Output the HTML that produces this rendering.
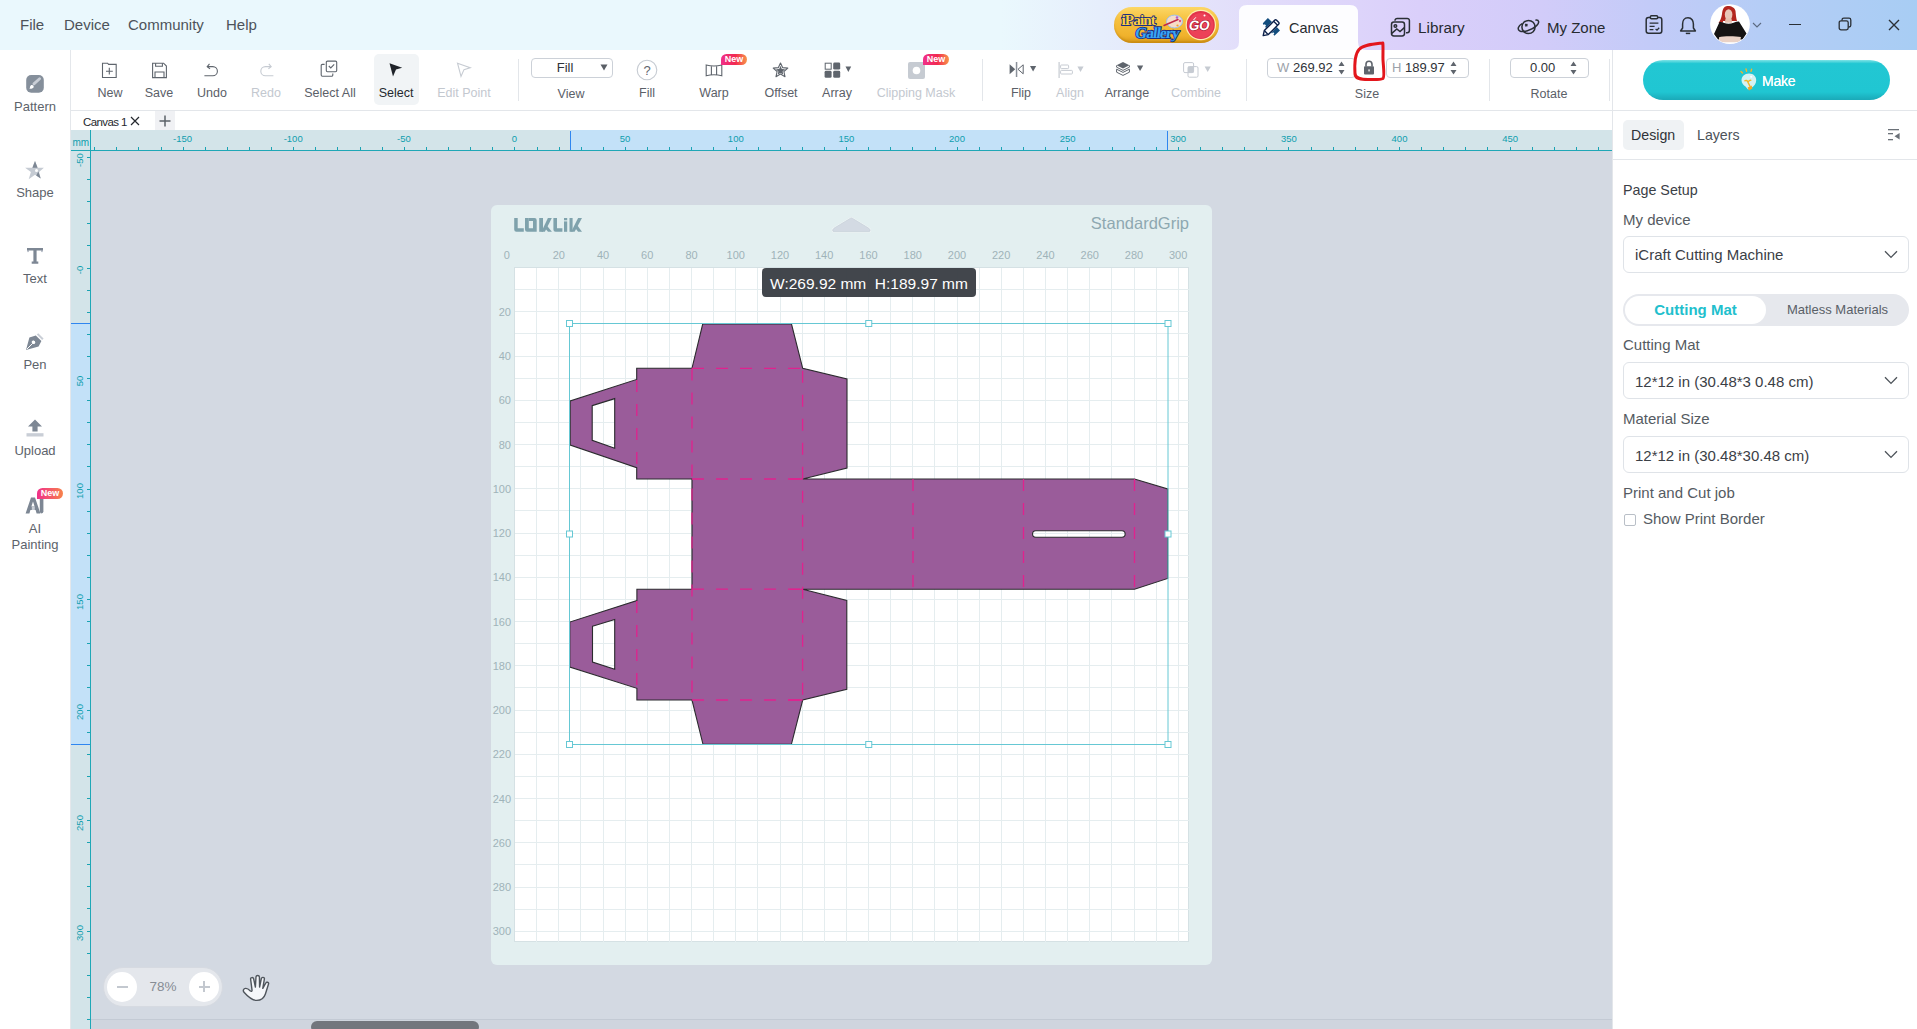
<!DOCTYPE html>
<html><head><meta charset="utf-8">
<style>
*{margin:0;padding:0;box-sizing:border-box}
html,body{width:1917px;height:1029px;overflow:hidden;background:#fff;font-family:"Liberation Sans",sans-serif;color:#4a4f56}
.a{position:absolute}
#top{left:0;top:0;width:1917px;height:50px;background:linear-gradient(90deg,#eaf8fd 0px,#eaf8fd 1000px,#e6eefc 1100px,#e2dcfa 1260px,#dacffa 1420px,#d2ccf9 1540px,#c3cbf8 1650px,#b5cdf6 1760px,#a8cdf4 1917px)}
.menu{top:16px;font-size:15px;color:#4d535a;line-height:18px}
#left{left:0;top:50px;width:71px;height:979px;background:#fff;border-right:1px solid #e4e7eb}
.sb{left:0;width:70px;text-align:center;font-size:13px;color:#5d636b;line-height:16px}
#tool{left:71px;top:50px;width:1541px;height:61px;background:#fff;border-bottom:1px solid #e3e6ea}
.tl{font-size:12.5px;color:#5b6068;line-height:14px;text-align:center;white-space:nowrap}
.dis{color:#c3c8cf}
.sep{width:1px;background:#e3e6ea}
#tabs{left:71px;top:111px;width:1541px;height:19px;background:#fff}
#hr{left:71px;top:130px;width:1541px;height:20px;background:#d3e4e9}
#vr{left:71px;top:150px;width:20px;height:879px;background:#d3e4e9}
#cv{left:91px;top:151px;width:1521px;height:878px;background:#d3d9e2}
#rp{left:1612px;top:50px;width:305px;height:979px;background:#fff;border-left:1px solid #e3e6ea}
.rl{font-size:14.5px;color:#555b62;line-height:18px}
.dd{left:1623px;width:286px;height:37px;border:1px solid #dfe3e8;border-radius:6px;background:#fff}
.dd span{position:absolute;left:11px;top:9px;font-size:15px;color:#3b4046;line-height:18px;white-space:nowrap}
.rul{font-size:9.5px;color:#0f9eae;line-height:12px}
.ml{font-size:11px;color:#9fb3b9;line-height:12px}
</style></head><body>
<!-- TOP BAR -->
<div id="top" class="a"></div>
<div class="a menu" style="left:20px">File</div>
<div class="a menu" style="left:64px">Device</div>
<div class="a menu" style="left:128px">Community</div>
<div class="a menu" style="left:226px">Help</div>
<!-- iPaint badge -->
<div class="a" style="left:1114px;top:7px;width:105px;height:36px;border-radius:18px;background:linear-gradient(180deg,#fcd766 0%,#f6c13f 35%,#f0b22c 80%,#d99a1a 100%);box-shadow:inset 0 -2px 2px rgba(170,110,0,.35)"></div>
<svg class="a" style="left:1114px;top:7px" width="105" height="36" viewBox="0 0 105 36">
<ellipse cx="60.5" cy="14.5" rx="8" ry="6.4" fill="#f6dcc8" stroke="#9dc0ee" stroke-width="1"/>
<circle cx="63" cy="10.5" r="1.3" fill="#b05cd0"/><circle cx="66" cy="14" r="1.2" fill="#e05080"/><circle cx="63.5" cy="18.5" r="1.1" fill="#f0a030"/><path d="M50 18.5 L64 12.5" stroke="#c02848" stroke-width="1.4" stroke-linecap="round"/>
<text x="7.5" y="17.5" font-family="Liberation Serif" font-weight="bold" font-size="15" fill="#ffcf3a" stroke="#1b2f80" stroke-width="1.8" paint-order="stroke" letter-spacing="-0.8">iPaint</text>
<text x="25" y="31.5" transform="skewX(-8)" font-family="Liberation Serif" font-weight="bold" font-size="15.5" fill="#38a6f4" stroke="#1b2f80" stroke-width="1.8" paint-order="stroke" letter-spacing="-0.9">Gallery</text>
<circle cx="86.8" cy="18" r="15.2" fill="#fdeeb0"/>
<circle cx="86.8" cy="18" r="14" fill="#e2334b"/>
<circle cx="86.8" cy="18.6" r="12.6" fill="#ec4258"/>
<circle cx="90.5" cy="8.4" r="1" fill="#fff"/><path d="M79.2 13.4 L81.6 10.6" stroke="#fff" stroke-width="1" stroke-linecap="round"/>
<text x="88.6" y="23.2" transform="skewX(-10)" text-anchor="middle" font-family="Liberation Sans" font-weight="bold" font-size="13.5" fill="#fff" stroke="#9a0f28" stroke-width="1.2" paint-order="stroke" letter-spacing="-0.3">GO</text>
</svg>
<!-- Canvas tab -->
<svg class="a" style="left:1230px;top:4px" width="137" height="46" viewBox="0 0 137 46"><path d="M0 46 Q9 46 9 38 V9 Q9 1 17 1 H120 Q128 1 128 9 V38 Q128 46 137 46Z" fill="#fdfdff"/></svg>
<svg class="a" style="left:1255px;top:12px" width="35" height="30" viewBox="0 0 35 30"><path d="M7.8 11.2 L12.9 6 L17 10 L11 16 L10.2 14.8 L11 13.4 L9.8 12.2 L8.6 13 Z" fill="#134d7e"/><path d="M16 21 L21.8 15 L25 18.4 L19.4 23.8 L18.4 22.4 L19.4 21.2 L18 20.2 L17.2 21.2Z" fill="#134d7e"/><path d="M9.3 18.6 L19.6 8.3 Q20.6 7.3 21.6 8.3 L23.6 10.3 Q24.6 11.3 23.6 12.3 L13.3 22.6 L8.2 23.6 Z" fill="#fdfdff" stroke="#0b1f4a" stroke-width="1.4" stroke-linejoin="round"/><path d="M18.6 9.3 L22.6 13.3 M9.6 18.8 L12.8 22.2" stroke="#0b1f4a" stroke-width="1.3"/></svg>
<div class="a" style="left:1289px;top:19px;font-size:14.5px;line-height:18px;color:#272b30">Canvas</div>
<svg class="a" style="left:1390px;top:17px" width="21" height="21" viewBox="0 0 21 21" fill="none" stroke="#2a2f35" stroke-width="1.5"><rect x="1.5" y="5" width="13" height="14" rx="2.4"/><path d="M5 3.8 V3.6 A2.2 2.2 0 0 1 7.2 1.4 H17.2 A2.2 2.2 0 0 1 19.4 3.6 V13.6 A2.2 2.2 0 0 1 17.2 15.8 H16"/><circle cx="5.4" cy="9" r="1.3"/><path d="M1.8 16.4 L6.8 12 L10 14.6 L14.4 10.6"/></svg>
<div class="a" style="left:1418px;top:19px;font-size:15.3px;line-height:18px;color:#272b30">Library</div>
<svg class="a" style="left:1517px;top:18px" width="23" height="18" viewBox="0 0 23 18" fill="none" stroke="#2a2f35" stroke-width="1.5"><circle cx="11.5" cy="9" r="6.6"/><path d="M5.2 5.6 C1 7.8 0.2 11.4 2.6 12.8 C5.8 14.8 14.6 12.4 19.6 7.6 C22.8 4.6 22.2 1.6 18.4 2.2"/><path d="M8.2 6 L10.4 8.2 M10.4 6 L8.2 8.2" stroke-width="1.3"/></svg>
<div class="a" style="left:1547px;top:19px;font-size:15px;line-height:18px;color:#272b30">My Zone</div>
<svg class="a" style="left:1645px;top:15px" width="18" height="19" viewBox="0 0 18 19" fill="none" stroke="#2a2f35" stroke-width="1.5"><rect x="1.2" y="2.6" width="15.6" height="15.6" rx="2.2"/><rect x="5.4" y="0.8" width="7.2" height="3" rx="1" fill="#c6d6f9"/><path d="M4.6 8.2 H13.4 M4.6 11.4 H9.6 M4.6 14.6 H8.4 M10.6 14 L12 15.2 L14.2 12.8" stroke-width="1.3"/></svg>
<svg class="a" style="left:1679px;top:16px" width="18" height="19" viewBox="0 0 18 19" fill="none" stroke="#2a2f35" stroke-width="1.5"><path d="M9 1.8 C5.2 1.8 3.6 4.8 3.6 8 V12 L1.6 15 H16.4 L14.4 12 V8 C14.4 4.8 12.8 1.8 9 1.8Z" stroke-linejoin="round"/><path d="M6.8 17.4 H11.2"/></svg>
<svg class="a" style="left:1706px;top:2px" width="48" height="46" viewBox="0 0 48 46"><defs><clipPath id="av"><circle cx="24" cy="22.1" r="19.6"/></clipPath></defs><circle cx="24" cy="22.1" r="19.9" fill="#fff"/><g clip-path="url(#av)"><path d="M21.5 4 C17.5 4 16.5 8 16 12 C15.5 16 14 19 12.5 21 L17 20.5 L17 19 H28.5 L31 19 C30 16 29.8 12 29.5 9 C29 6 26 4 21.5 4Z" fill="#b3261f"/><ellipse cx="22.6" cy="12.6" rx="3.8" ry="5.4" fill="#e9c6b8"/><path d="M19.5 16.5 H25.5 L26.2 20.8 H18.8Z" fill="#e6bfae"/><path d="M13.5 20 L8 32 L12 37.5 H36.5 L40.5 31.5 L33 19.5 C29 19.5 26 21.8 22.5 21.8 C19 21.8 16.5 19.5 13.5 20Z" fill="#151313"/><path d="M13 35.2 C17 34 29 34 35 35 L34 39.4 C28 40.6 18 40.6 13 39.4Z" fill="#ead2c6"/></g></svg>
<svg class="a" style="left:1752px;top:21px" width="10" height="8" viewBox="0 0 10 8"><path d="M1 2 L5 6 L9 2" fill="none" stroke="#5b6a80" stroke-width="1.1"/></svg>
<div class="a" style="left:1789px;top:24px;width:12px;height:1.4px;background:#2a2f35"></div>
<svg class="a" style="left:1838px;top:17px" width="14" height="14" viewBox="0 0 14 14" fill="none" stroke="#2a2f35" stroke-width="1.3"><rect x="1.2" y="3.8" width="9" height="9" rx="1.8"/><path d="M4 3.6 V3 A1.8 1.8 0 0 1 5.8 1.2 H11 A1.8 1.8 0 0 1 12.8 3 V8.2 A1.8 1.8 0 0 1 11 10 H10.4"/></svg>
<svg class="a" style="left:1888px;top:19px" width="12" height="12" viewBox="0 0 12 12" stroke="#2a2f35" stroke-width="1.4"><path d="M1 1 L11 11 M11 1 L1 11"/></svg>

<!-- LEFT SIDEBAR -->
<div id="left" class="a"></div>
<svg class="a" style="left:26px;top:75px" width="18" height="18" viewBox="0 0 18 18"><rect x="0.2" y="0" width="17.6" height="17.7" rx="5" fill="#858f9b"/><path d="M13.6 3.7 L7.9 8.9" stroke="#c9ced6" stroke-width="2.8" stroke-linecap="round"/><path d="M5.9 9.9 C7.3 9.9 8 11 7.6 12.2 C7.1 13.4 5.2 14 3.2 13.6 C4.2 13 4 12.2 4.1 11.6 C4.3 10.6 5 9.9 5.9 9.9Z" fill="#fff"/></svg>
<div class="a sb" style="top:99px">Pattern</div>
<svg class="a" style="left:25px;top:160px" width="20" height="20" viewBox="0 0 20 20"><path d="M10 1 L12.6 7.8 L18.9 7.8 L14.1 12 L15.7 18.6 L10 14.8 L3.7 19.2 L5.9 12 L0.1 7.8 L7.4 7.8Z" fill="#c5cbd3"/><path d="M10 1 L12.6 7.8 H7.4Z" fill="#7d8794"/><path d="M13.4 11.6 L15.7 18.6 L11.2 15.6Z" fill="#7d8794"/><circle cx="11.5" cy="10.6" r="1.5" fill="#fff"/></svg>
<div class="a sb" style="top:185px">Shape</div>
<svg class="a" style="left:26px;top:247px" width="18" height="18" viewBox="0 0 18 18"><path d="M1 1 H17 V5 H15.2 V3.6 H10.6 V14.4 H12.3 V16.8 H5.7 V14.4 H7.4 V3.6 H2.8 V5 H1Z" fill="#7d8794"/><rect x="1" y="3.5" width="1.8" height="1.6" fill="#c9ced6"/><rect x="15.2" y="3.5" width="1.8" height="1.6" fill="#c9ced6"/></svg>
<div class="a sb" style="top:271px">Text</div>
<svg class="a" style="left:25px;top:332px" width="20" height="19" viewBox="0 0 20 19"><path d="M13.2 1.2 L18.6 6.6 L17.2 8 L11.8 2.6Z" fill="#c9ced6"/><path d="M10.8 3.4 L16.4 9 L13.6 14.6 L1 18 L4.4 5.4Z M8.3 8.5 A1.6 1.6 0 1 0 8.31 8.5Z" fill="#7d8794"/><path d="M1.8 17.2 L7.4 11.6" stroke="#fff" stroke-width="1"/><circle cx="8.6" cy="10.4" r="1.6" fill="#fff"/></svg>
<div class="a sb" style="top:357px">Pen</div>
<svg class="a" style="left:26px;top:419px" width="18" height="18" viewBox="0 0 18 18"><path d="M9 0.5 L16 7.5 H11.6 V12.6 H6.4 V7.5 H2Z" fill="#7d8794"/><rect x="0.5" y="14.2" width="17" height="3.3" fill="#c9ced6"/></svg>
<div class="a sb" style="top:443px">Upload</div>
<svg class="a" style="left:25px;top:497px" width="20" height="17" viewBox="0 0 20 17"><path d="M6 0.6 H10 L15.4 16.4 H11.6 L10.6 13 H5.4 L4.4 16.4 H0.6Z M6.4 9.6 H9.6 L8 4.6Z" fill="#7d8794"/><rect x="14.8" y="0.6" width="3.6" height="15.8" rx="1.8" fill="#7d8794"/><rect x="6.8" y="9.6" width="3" height="3.4" fill="#c9ced6"/></svg>
<div class="a" style="left:37px;top:488px;width:26px;height:11px;border-radius:6px 6px 6px 0;background:linear-gradient(90deg,#f0308a,#f7824a);color:#fff;font-size:9px;line-height:11px;text-align:center;font-weight:bold">New</div>
<div class="a sb" style="top:521px">AI</div>
<div class="a sb" style="top:537px">Painting</div>

<!-- TOOLBAR -->
<div id="tool" class="a"></div>
<div class="a" style="left:374px;top:54px;width:45px;height:51px;border-radius:5px;background:#f1f4f6"></div>
<!-- icons -->
<svg class="a" style="left:101px;top:62px" width="17" height="17" viewBox="0 0 17 17" fill="none" stroke="#5f656d" stroke-width="1.1"><path d="M1.5 1.2 H6.6 L7.6 2.4 H15.2 V15.5 H1.5Z"/><path d="M8.3 5.8 V12.6 M5 9.2 H11.8"/></svg>
<svg class="a" style="left:151px;top:62px" width="17" height="17" viewBox="0 0 17 17" fill="none" stroke="#5f656d" stroke-width="1.1"><path d="M1.6 1.2 H12.6 L15.4 4 V15.6 H1.6Z"/><path d="M4.6 1.2 V4.2 H11.4 V1.2 M4 15.6 V10 H13 V15.6"/></svg>
<svg class="a" style="left:204px;top:62px" width="17" height="17" viewBox="0 0 17 17" fill="none" stroke="#5f656d" stroke-width="1.1"><path d="M5.5 1.8 L3.2 4.6 L6 6.8"/><path d="M3.4 4.6 H8.8 A4.6 4.6 0 0 1 8.8 13.8 H0.4"/></svg>
<svg class="a" style="left:257px;top:62px" width="17" height="17" viewBox="0 0 17 17" fill="none" stroke="#c6cbd2" stroke-width="1.1"><path d="M11.8 1.8 L14.2 4.6 L11.4 6.8"/><path d="M14 4.6 H8.4 A4.6 4.6 0 0 0 8.4 13.8 H16.4"/></svg>
<svg class="a" style="left:320px;top:60px" width="18" height="18" viewBox="0 0 18 18" fill="none" stroke="#5f656d" stroke-width="1.1"><rect x="6.3" y="1.1" width="10.4" height="10.6" rx="1.2"/><path d="M4.6 4.4 H2.4 A1.2 1.2 0 0 0 1.2 5.6 V15 A1.2 1.2 0 0 0 2.4 16.2 H11.6 A1.2 1.2 0 0 0 12.8 15 V13.4"/><path d="M8.8 6 L10.8 8 L14.2 4.4"/></svg>
<svg class="a" style="left:388px;top:62px" width="16" height="16" viewBox="0 0 16 16"><path d="M1.5 1.2 L14.2 5.8 L8 7.6 L5 14.4Z" fill="#1f2329"/></svg>
<svg class="a" style="left:456px;top:62px" width="16" height="16" viewBox="0 0 16 16" fill="none" stroke="#c6cbd2" stroke-width="1.1"><path d="M1.5 1.2 L14.2 5.8 L8 7.6 L5 14.4Z"/></svg>
<div class="a sep" style="left:518px;top:59px;height:42px"></div>
<div class="a" style="left:531px;top:58px;width:82px;height:20px;border:1px solid #ccd1d8;border-radius:4px;background:#fff"></div>
<div class="a" style="left:555px;top:61px;width:20px;font-size:13px;line-height:14px;color:#2f3338;text-align:center">Fill</div>
<svg class="a" style="left:600px;top:64px" width="8" height="7" viewBox="0 0 8 7"><path d="M0.5 0.5 H7.5 L4 6.5Z" fill="#5a5f66"/></svg>
<svg class="a" style="left:636px;top:59px" width="22" height="22" viewBox="0 0 22 22"><circle cx="11" cy="11" r="9.8" fill="none" stroke="#c6cbd2" stroke-width="1.1"/><text x="11" y="15.6" font-size="13" text-anchor="middle" fill="#5f656d" font-family="Liberation Sans">?</text></svg>
<svg class="a" style="left:705px;top:64px" width="18" height="13" viewBox="0 0 18 13" fill="none" stroke="#5f656d" stroke-width="1.1"><path d="M1.2 1 Q9 3 16.8 1 V11.8 Q9 9.8 1.2 11.8Z M6.4 1.9 V10.9 M11.6 1.9 V10.9"/></svg>
<svg class="a" style="left:772px;top:62px" width="17" height="17" viewBox="0 0 17 17"><path d="M8.5 1 L10.6 5.6 L15.8 6.1 L11.9 9.5 L13 14.7 L8.5 12 L4 14.7 L5.1 9.5 L1.2 6.1 L6.4 5.6Z" fill="none" stroke="#5f656d" stroke-width="1.1" stroke-linejoin="round"/><path d="M8.5 3.8 L9.8 6.9 L13.1 7.2 L10.6 9.4 L11.3 12.6 L8.5 10.9 L5.7 12.6 L6.4 9.4 L3.9 7.2 L7.2 6.9Z" fill="#5f656d"/></svg>
<svg class="a" style="left:824px;top:62px" width="28" height="17" viewBox="0 0 28 17"><rect x="1.2" y="1.2" width="6" height="6" fill="none" stroke="#5f656d" stroke-width="1"/><rect x="9.2" y="0.6" width="7" height="7" rx="1.4" fill="#5f656d"/><rect x="0.6" y="8.8" width="7" height="7" rx="1.4" fill="#5f656d"/><rect x="9.2" y="8.8" width="7" height="7" rx="1.4" fill="#5f656d"/><path d="M21.5 4.6 H27.2 L24.35 10Z" fill="#5f656d"/></svg>
<svg class="a" style="left:908px;top:62px" width="17" height="17" viewBox="0 0 17 17"><rect x="0" y="0" width="17" height="17" rx="2" fill="#c6cbd2"/><circle cx="8.5" cy="8.5" r="3.8" fill="#fff"/></svg>
<div class="a sep" style="left:982px;top:59px;height:42px"></div>
<svg class="a" style="left:1009px;top:62px" width="28" height="15" viewBox="0 0 28 15"><path d="M0.6 2.3 L6.2 7.3 L0.6 12.3Z" fill="#5f656d"/><rect x="6.8" y="0" width="1.5" height="15" fill="#8a9099"/><path d="M14.2 2.8 L9 7.3 L14.2 11.8Z" fill="none" stroke="#5f656d" stroke-width="1"/><path d="M21 4 H27.2 L24.1 9.6Z" fill="#5f656d"/></svg>
<svg class="a" style="left:1058px;top:62px" width="28" height="16" viewBox="0 0 28 16"><rect x="0.5" y="0" width="1.2" height="16" fill="#c6cbd2"/><rect x="2.6" y="3" width="8" height="3.6" rx="0.8" fill="none" stroke="#c6cbd2" stroke-width="1"/><rect x="2.6" y="8.4" width="11.8" height="3.6" rx="0.8" fill="none" stroke="#c6cbd2" stroke-width="1"/><path d="M19.4 4.6 H25.6 L22.5 10Z" fill="#c6cbd2"/></svg>
<svg class="a" style="left:1116px;top:61px" width="28" height="17" viewBox="0 0 28 17"><path d="M7 1 L13.4 4.2 L7 7.4 L0.6 4.2Z" fill="#5f656d"/><path d="M0.6 4.4 V6.2 L7 9.4 L13.4 6.2 V4.4" fill="none" stroke="#5f656d" stroke-width="1"/><path d="M0.6 8.2 L7 11.4 L13.4 8.2 M0.6 11.2 L7 14.4 L13.4 11.2 M0.6 8.2 V11.2 M13.4 8.2 V11.2" fill="none" stroke="#5f656d" stroke-width="1"/><path d="M21 4.6 H27.2 L24.1 10Z" fill="#5f656d"/></svg>
<svg class="a" style="left:1183px;top:62px" width="29" height="16" viewBox="0 0 29 16"><rect x="0.6" y="0.6" width="10" height="10" rx="1.4" fill="none" stroke="#c6cbd2" stroke-width="1"/><rect x="5" y="4.6" width="10" height="10.6" rx="1.4" fill="none" stroke="#c6cbd2" stroke-width="1"/><rect x="5" y="4.6" width="5.6" height="6" fill="#c6cbd2"/><path d="M21.6 4.6 H27.8 L24.7 10Z" fill="#c6cbd2"/></svg>
<div class="a sep" style="left:1246px;top:59px;height:42px"></div>
<div class="a" style="left:1267px;top:58px;width:89px;height:20px;border:1px solid #ccd1d8;border-radius:4px;background:#fff"></div>
<div class="a" style="left:1386px;top:58px;width:83px;height:20px;border:1px solid #ccd1d8;border-radius:4px;background:#fff"></div>
<div class="a" style="left:1277px;top:61px;font-size:13px;line-height:14px;color:#9ca2aa">W</div>
<div class="a" style="left:1293px;top:61px;font-size:13px;line-height:14px;color:#2f3338">269.92</div>
<div class="a" style="left:1392px;top:61px;font-size:13px;line-height:14px;color:#9ca2aa">H</div>
<div class="a" style="left:1405px;top:61px;font-size:13px;line-height:14px;color:#2f3338">189.97</div>
<div class="a" style="left:1510px;top:58px;width:79px;height:20px;border:1px solid #ccd1d8;border-radius:4px;background:#fff"></div>
<div class="a" style="left:1530px;top:61px;font-size:13px;line-height:14px;color:#2f3338">0.00</div>
<svg class="a" style="left:1338px;top:61px" width="7" height="14" viewBox="0 0 7 14"><path d="M3.5 0.5 L6.5 5 H0.5Z M3.5 13.5 L6.5 9 H0.5Z" fill="#5f656d"/></svg>
<svg class="a" style="left:1450px;top:61px" width="7" height="14" viewBox="0 0 7 14"><path d="M3.5 0.5 L6.5 5 H0.5Z M3.5 13.5 L6.5 9 H0.5Z" fill="#5f656d"/></svg>
<svg class="a" style="left:1570px;top:61px" width="7" height="14" viewBox="0 0 7 14"><path d="M3.5 0.5 L6.5 5 H0.5Z M3.5 13.5 L6.5 9 H0.5Z" fill="#5f656d"/></svg>
<svg class="a" style="left:1363px;top:60px" width="12" height="15" viewBox="0 0 12 15"><path d="M3 6.5 V4.2 A3 3 0 0 1 9 4.2 V6.5" fill="none" stroke="#5f656d" stroke-width="1.6"/><rect x="1" y="6.2" width="10" height="8.4" rx="1" fill="#5f656d"/><rect x="5.4" y="9.4" width="1.3" height="2" fill="#fff"/></svg>
<svg class="a" style="left:1352px;top:40px" width="34" height="43" viewBox="0 0 34 43"><path d="M30.8 3 C22 4 12 4.5 7 9.5 C3 14 2.5 26 3 34 C3.5 39 9 39.5 16 39.5 C22 39.5 28 40 31 38.5 C32.8 37 31.5 28 31 20 C30.8 14 31.3 7 30.8 3Z" fill="none" stroke="#e3161c" stroke-width="3" stroke-linejoin="round"/></svg>
<div class="a sep" style="left:1489px;top:59px;height:42px"></div>
<div class="a sep" style="left:1609px;top:59px;height:42px"></div>
<!-- New badges -->
<div class="a" style="left:721px;top:54px;width:26px;height:11px;border-radius:6px 6px 6px 0;background:linear-gradient(90deg,#f0308a,#f2294f 55%,#f7964a);color:#fff;font-size:9px;line-height:11px;text-align:center;font-weight:bold">New</div>
<div class="a" style="left:923px;top:54px;width:26px;height:11px;border-radius:6px 6px 6px 0;background:linear-gradient(90deg,#f0308a,#f2294f 55%,#f7964a);color:#fff;font-size:9px;line-height:11px;text-align:center;font-weight:bold">New</div>
<!-- labels -->
<div class="a tl" style="left:80px;width:60px;top:86px">New</div>
<div class="a tl" style="left:129px;width:60px;top:86px">Save</div>
<div class="a tl" style="left:182px;width:60px;top:86px">Undo</div>
<div class="a tl dis" style="left:236px;width:60px;top:86px">Redo</div>
<div class="a tl" style="left:290px;width:80px;top:86px">Select All</div>
<div class="a tl" style="left:366px;width:60px;top:86px;color:#25292e">Select</div>
<div class="a tl dis" style="left:424px;width:80px;top:86px">Edit Point</div>
<div class="a tl" style="left:541px;width:60px;top:87px">View</div>
<div class="a tl" style="left:617px;width:60px;top:86px">Fill</div>
<div class="a tl" style="left:684px;width:60px;top:86px">Warp</div>
<div class="a tl" style="left:751px;width:60px;top:86px">Offset</div>
<div class="a tl" style="left:807px;width:60px;top:86px">Array</div>
<div class="a tl dis" style="left:866px;width:100px;top:86px">Clipping Mask</div>
<div class="a tl" style="left:991px;width:60px;top:86px">Flip</div>
<div class="a tl dis" style="left:1040px;width:60px;top:86px">Align</div>
<div class="a tl" style="left:1097px;width:60px;top:86px">Arrange</div>
<div class="a tl dis" style="left:1166px;width:60px;top:86px">Combine</div>
<div class="a tl" style="left:1337px;width:60px;top:87px">Size</div>
<div class="a tl" style="left:1519px;width:60px;top:87px">Rotate</div>

<!-- TABS -->
<div id="tabs" class="a"></div>
<div class="a" style="left:83px;top:115px;font-size:11.5px;line-height:14px;color:#25292e;letter-spacing:-0.6px">Canvas 1</div>
<svg class="a" style="left:130px;top:116px" width="10" height="10" viewBox="0 0 10 10" stroke="#25292e" stroke-width="1.2"><path d="M1 1 L9 9 M9 1 L1 9"/></svg>
<div class="a" style="left:155px;top:111px;width:20px;height:19px;background:#f0f1f4"></div>
<svg class="a" style="left:159px;top:115px" width="12" height="12" viewBox="0 0 12 12" stroke="#5b6168" stroke-width="1.5"><path d="M6 0.5 V11.5 M0.5 6 H11.5"/></svg>

<!-- RULERS -->
<div id="hr" class="a"></div>
<div id="vr" class="a"></div>
<div class="a" style="left:571px;top:130px;width:597px;height:20px;background:#c3e1f8"></div>
<div class="a" style="left:570px;top:131px;width:1px;height:19px;background:#2f86f0"></div>
<div class="a" style="left:1167px;top:131px;width:1px;height:19px;background:#2f86f0"></div>
<div class="a" style="left:71px;top:323px;width:19px;height:421px;background:#c3e1f8"></div>
<div class="a" style="left:71px;top:323px;width:19px;height:1.3px;background:#2f86f0"></div>
<div class="a" style="left:71px;top:743.7px;width:19px;height:1.2px;background:#2f86f0"></div>
<svg class="a" style="left:0;top:0" width="1612" height="1029" viewBox="0 0 1612 1029" shape-rendering="crispEdges">
<path d="M94.5 147V150M116.5 147V150M138.5 147V150M161.5 147V150M183.5 147V150M205.5 147V150M227.5 147V150M249.5 147V150M271.5 147V150M293.5 147V150M315.5 147V150M337.5 147V150M360.5 147V150M382.5 147V150M404.5 147V150M426.5 147V150M448.5 147V150M470.5 147V150M492.5 147V150M514.5 147V150M537.5 147V150M559.5 147V150M581.5 147V150M603.5 147V150M625.5 147V150M647.5 147V150M669.5 147V150M691.5 147V150M713.5 147V150M736.5 147V150M758.5 147V150M780.5 147V150M802.5 147V150M824.5 147V150M846.5 147V150M868.5 147V150M890.5 147V150M912.5 147V150M935.5 147V150M957.5 147V150M979.5 147V150M1001.5 147V150M1023.5 147V150M1045.5 147V150M1067.5 147V150M1089.5 147V150M1112.5 147V150M1134.5 147V150M1156.5 147V150M1178.5 147V150M1200.5 147V150M1222.5 147V150M1244.5 147V150M1266.5 147V150M1288.5 147V150M1311.5 147V150M1333.5 147V150M1355.5 147V150M1377.5 147V150M1399.5 147V150M1421.5 147V150M1443.5 147V150M1465.5 147V150M1487.5 147V150M1510.5 147V150M1532.5 147V150M1554.5 147V150M1576.5 147V150M1598.5 147V150M87 157.5H90M87 179.5H90M87 201.5H90M87 223.5H90M87 245.5H90M87 268.5H90M87 290.5H90M87 312.5H90M87 334.5H90M87 356.5H90M87 378.5H90M87 400.5H90M87 422.5H90M87 444.5H90M87 466.5H90M87 489.5H90M87 511.5H90M87 533.5H90M87 555.5H90M87 577.5H90M87 599.5H90M87 621.5H90M87 643.5H90M87 665.5H90M87 687.5H90M87 710.5H90M87 732.5H90M87 754.5H90M87 776.5H90M87 798.5H90M87 820.5H90M87 842.5H90M87 864.5H90M87 886.5H90M87 908.5H90M87 931.5H90M87 953.5H90M87 975.5H90M87 997.5H90M87 1019.5H90" stroke="#1aa3b3" stroke-width="1" fill="none"/>
<rect x="71" y="150" width="1541" height="1.2" fill="#1fa7b6"/>
<rect x="90" y="130" width="1.1" height="899" fill="#1fa7b6"/>
</svg>
<div class="a rul" style="left:162.6px;top:133px;width:40px;text-align:center">-150</div>
<div class="a rul" style="left:273.2px;top:133px;width:40px;text-align:center">-100</div>
<div class="a rul" style="left:383.9px;top:133px;width:40px;text-align:center">-50</div>
<div class="a rul" style="left:494.5px;top:133px;width:40px;text-align:center">0</div>
<div class="a rul" style="left:605.1px;top:133px;width:40px;text-align:center">50</div>
<div class="a rul" style="left:715.8px;top:133px;width:40px;text-align:center">100</div>
<div class="a rul" style="left:826.4px;top:133px;width:40px;text-align:center">150</div>
<div class="a rul" style="left:937.0px;top:133px;width:40px;text-align:center">200</div>
<div class="a rul" style="left:1047.6px;top:133px;width:40px;text-align:center">250</div>
<div class="a rul" style="left:1158.2px;top:133px;width:40px;text-align:center">300</div>
<div class="a rul" style="left:1268.9px;top:133px;width:40px;text-align:center">350</div>
<div class="a rul" style="left:1379.5px;top:133px;width:40px;text-align:center">400</div>
<div class="a rul" style="left:1490.1px;top:133px;width:40px;text-align:center">450</div>
<div class="a rul" style="left:72.5px;top:137px;font-size:10px">mm</div>
<div class="a rul" style="left:60.3px;top:153.5px;width:40px;text-align:center;transform:rotate(-90deg)">-50</div>
<div class="a rul" style="left:60.3px;top:264.0px;width:40px;text-align:center;transform:rotate(-90deg)">-0</div>
<div class="a rul" style="left:60.3px;top:374.5px;width:40px;text-align:center;transform:rotate(-90deg)">50</div>
<div class="a rul" style="left:60.3px;top:485.0px;width:40px;text-align:center;transform:rotate(-90deg)">100</div>
<div class="a rul" style="left:60.3px;top:595.5px;width:40px;text-align:center;transform:rotate(-90deg)">150</div>
<div class="a rul" style="left:60.3px;top:706.0px;width:40px;text-align:center;transform:rotate(-90deg)">200</div>
<div class="a rul" style="left:60.3px;top:816.5px;width:40px;text-align:center;transform:rotate(-90deg)">250</div>
<div class="a rul" style="left:60.3px;top:927.0px;width:40px;text-align:center;transform:rotate(-90deg)">300</div>

<!-- CANVAS -->
<div id="cv" class="a"></div>
<div class="a" style="left:491px;top:205px;width:721px;height:760px;background:#e3eff0;border-radius:6px"></div>
<svg class="a" style="left:0;top:0" width="1612" height="1029" viewBox="0 0 1612 1029">
<rect x="514.5" y="267.5" width="674" height="674" fill="#fff" stroke="#d5e1e4" stroke-width="1"/>
<path d="M536.5 268V942M515 289.5H1189M558.5 268V942M515 311.5H1189M580.5 268V942M515 333.5H1189M603.5 268V942M515 356.5H1189M625.5 268V942M515 378.5H1189M647.5 268V942M515 400.5H1189M669.5 268V942M515 422.5H1189M691.5 268V942M515 444.5H1189M713.5 268V942M515 466.5H1189M735.5 268V942M515 488.5H1189M757.5 268V942M515 510.5H1189M780.5 268V942M515 533.5H1189M802.5 268V942M515 555.5H1189M824.5 268V942M515 577.5H1189M846.5 268V942M515 599.5H1189M868.5 268V942M515 621.5H1189M890.5 268V942M515 643.5H1189M912.5 268V942M515 665.5H1189M934.5 268V942M515 687.5H1189M957.5 268V942M515 710.5H1189M979.5 268V942M515 732.5H1189M1001.5 268V942M515 754.5H1189M1023.5 268V942M515 776.5H1189M1045.5 268V942M515 798.5H1189M1067.5 268V942M515 820.5H1189M1089.5 268V942M515 842.5H1189M1111.5 268V942M515 864.5H1189M1134.5 268V942M515 887.5H1189M1156.5 268V942M515 909.5H1189M1178.5 268V942M515 931.5H1189" stroke="#e5edef" stroke-width="1" fill="none"/>
</svg>
<div class="a ml" style="left:486.8px;top:249px;width:40px;text-align:center">0</div>
<div class="a ml" style="left:538.8px;top:249px;width:40px;text-align:center">20</div>
<div class="a ml" style="left:583.0px;top:249px;width:40px;text-align:center">40</div>
<div class="a ml" style="left:627.2px;top:249px;width:40px;text-align:center">60</div>
<div class="a ml" style="left:671.5px;top:249px;width:40px;text-align:center">80</div>
<div class="a ml" style="left:715.8px;top:249px;width:40px;text-align:center">100</div>
<div class="a ml" style="left:760.0px;top:249px;width:40px;text-align:center">120</div>
<div class="a ml" style="left:804.2px;top:249px;width:40px;text-align:center">140</div>
<div class="a ml" style="left:848.5px;top:249px;width:40px;text-align:center">160</div>
<div class="a ml" style="left:892.8px;top:249px;width:40px;text-align:center">180</div>
<div class="a ml" style="left:937.0px;top:249px;width:40px;text-align:center">200</div>
<div class="a ml" style="left:981.2px;top:249px;width:40px;text-align:center">220</div>
<div class="a ml" style="left:1025.5px;top:249px;width:40px;text-align:center">240</div>
<div class="a ml" style="left:1069.8px;top:249px;width:40px;text-align:center">260</div>
<div class="a ml" style="left:1114.0px;top:249px;width:40px;text-align:center">280</div>
<div class="a ml" style="left:1158.2px;top:249px;width:40px;text-align:center">300</div>
<div class="a ml" style="left:470px;top:305.8px;width:41px;text-align:right">20</div>
<div class="a ml" style="left:470px;top:350.0px;width:41px;text-align:right">40</div>
<div class="a ml" style="left:470px;top:394.2px;width:41px;text-align:right">60</div>
<div class="a ml" style="left:470px;top:438.5px;width:41px;text-align:right">80</div>
<div class="a ml" style="left:470px;top:482.8px;width:41px;text-align:right">100</div>
<div class="a ml" style="left:470px;top:527.0px;width:41px;text-align:right">120</div>
<div class="a ml" style="left:470px;top:571.2px;width:41px;text-align:right">140</div>
<div class="a ml" style="left:470px;top:615.5px;width:41px;text-align:right">160</div>
<div class="a ml" style="left:470px;top:659.8px;width:41px;text-align:right">180</div>
<div class="a ml" style="left:470px;top:704.0px;width:41px;text-align:right">200</div>
<div class="a ml" style="left:470px;top:748.2px;width:41px;text-align:right">220</div>
<div class="a ml" style="left:470px;top:792.5px;width:41px;text-align:right">240</div>
<div class="a ml" style="left:470px;top:836.8px;width:41px;text-align:right">260</div>
<div class="a ml" style="left:470px;top:881.0px;width:41px;text-align:right">280</div>
<div class="a ml" style="left:470px;top:925.2px;width:41px;text-align:right">300</div>
<svg class="a" style="left:510px;top:212px" width="80" height="26" viewBox="0 0 80 26" fill="#7fa2ac"><path d="M4.2 6H7.7V16.3H13.8V19.8H6.4Q4.2 19.8 4.2 17.6Z"/><path d="M15 6H18.8V16.3H23V19.8H17.2Q15 19.8 15 17.6Z"/><path d="M18.9 6H24.5Q26.7 6 26.7 8.2V19.8H23V9.1H18.9Z"/><path d="M29.2 6H33V19.8H29.2Z"/><path d="M31.4 19.8L37.9 6H41.8L34.9 19.8Z"/><path d="M36.6 13.2L41.9 19.8H38L34.4 15.6Z"/><path d="M43.4 6H47V16.3H52.4V19.8H45.6Q43.4 19.8 43.4 17.6Z"/><path d="M54 6H57.2V8.3H54Z"/><path d="M54 9.4H57.2V19.8H54Z"/><path d="M59.5 6H62.6V19.8H59.5Z"/><path d="M61.2 19.8L68.1 6H72L64.6 19.8Z"/><path d="M67 13L72 19.8H68.1L64.8 15.6Z"/></svg>
<svg class="a" style="left:830px;top:216px" width="43" height="18" viewBox="0 0 43 18"><path d="M20.6 2.2 Q21.4 1.7 22.2 2.2 L38.8 12.2 Q41.2 14 39.6 15.6 H3.2 Q1.6 14 4 12.2Z" fill="#d3dae3" stroke="#f4f7f8" stroke-width="1.6"/><path d="M20.6 2.2 Q21.4 1.7 22.2 2.2 L38.8 12.2 Q41.2 14 39.6 15.6 H3.2 Q1.6 14 4 12.2Z" fill="#d3dae3" stroke="#c3cfd7" stroke-width="0.7"/></svg>
<div class="a" style="left:1040px;top:213px;width:149px;text-align:right;font-size:16.5px;line-height:20px;color:#8ea8b0">StandardGrip</div>
<svg class="a" style="left:0;top:0" width="1612" height="1029" viewBox="0 0 1612 1029">
<path d="M702.7,324 L791.5,324 L802.7,368.3 L847,379 L847,468 L802.7,479 L1134.5,479 L1167.7,489 L1167.7,578.4 L1134.5,589.3 L802.7,589.3 L846.8,600.5 L846.8,689.2 L802.7,700 L791.4,744.3 L703,744.3 L692,700 L636.9,700 L636.9,688.3 L569.8,667 L569.8,622.1 L636.9,600.5 L636.9,589.2 L692,589.2 L692,479 L636.7,479 L636.7,467.7 L570.2,445.1 L570.2,400.9 L636.7,379.4 L636.7,368.3 L692,368.3Z M592.2,405.6 L614.7,398.6 L614.7,448.2 L592.2,440.3Z M592.5,626.2 L614.7,619.5 L614.7,669.3 L592.5,662Z M1035.8,530.8 H1121.9 A3.25,3.25 0 0 1 1121.9,537.3 H1035.8 A3.25,3.25 0 0 1 1035.8,530.8Z" fill="#9a5c9a" fill-rule="evenodd" stroke="#2b2b2e" stroke-width="1.1" stroke-linejoin="miter"/>
<path d="M692,368.4 H802.6 M692,479 H802.6 M692,589.2 H802.6 M692,700 H802.6 M692,368.4 V700" stroke="#e0228e" stroke-width="1.3" fill="none" stroke-dasharray="12 12"/>
<path d="M802.6,370.7 V700 M913,479 V589.3 M1023.5,479 V589.3 M1134.5,479 V589.3 M636.8,380 V467.7 M636.8,601 V688.3" stroke="#e0228e" stroke-width="1.3" fill="none" stroke-dasharray="12 12"/>
<path d="M790,479 H802.6 M790,589.3 H802.6 M788,700 H802.6" stroke="#e0228e" stroke-width="1.3" fill="none"/>
<rect x="569.5" y="323.5" width="598.5" height="421" fill="none" stroke="#66c8d4" stroke-width="1"/>
<rect x="566.5" y="320.5" width="6" height="6" fill="#fff" stroke="#66c8d4" stroke-width="1"/>
<rect x="865.75" y="320.5" width="6" height="6" fill="#fff" stroke="#66c8d4" stroke-width="1"/>
<rect x="1165" y="320.5" width="6" height="6" fill="#fff" stroke="#66c8d4" stroke-width="1"/>
<rect x="566.5" y="531" width="6" height="6" fill="#fff" stroke="#66c8d4" stroke-width="1"/>
<rect x="1165" y="531" width="6" height="6" fill="#fff" stroke="#66c8d4" stroke-width="1"/>
<rect x="566.5" y="741.5" width="6" height="6" fill="#fff" stroke="#66c8d4" stroke-width="1"/>
<rect x="865.75" y="741.5" width="6" height="6" fill="#fff" stroke="#66c8d4" stroke-width="1"/>
<rect x="1165" y="741.5" width="6" height="6" fill="#fff" stroke="#66c8d4" stroke-width="1"/>
</svg>
<div class="a" style="left:762px;top:268px;width:214px;height:29px;border-radius:4px;background:rgba(58,62,69,0.96)"></div>
<div class="a" style="left:762px;top:269px;width:214px;height:29px;line-height:29px;text-align:center;font-size:15.5px;color:#fff;white-space:pre">W:269.92 mm  H:189.97 mm</div>

<!-- BOTTOM CONTROLS -->
<div class="a" style="left:103px;top:967px;width:120px;height:40px;border-radius:20px;background:#e4e7ec;border:1px solid #d6dae1"></div>
<div class="a" style="left:107px;top:972px;width:30px;height:30px;border-radius:15px;background:#fff"></div>
<div class="a" style="left:189px;top:972px;width:30px;height:30px;border-radius:15px;background:#fff"></div>
<div class="a" style="left:116.5px;top:986.2px;width:11px;height:1.4px;background:#c3c8cf"></div>
<div class="a" style="left:198.5px;top:986.2px;width:11px;height:1.4px;background:#c3c8cf"></div>
<div class="a" style="left:203.3px;top:981.3px;width:1.4px;height:11px;background:#c3c8cf"></div>
<div class="a" style="left:143px;top:979px;width:40px;text-align:center;font-size:13.5px;line-height:16px;color:#868c94">78%</div>
<svg class="a" style="left:238px;top:970px" width="36" height="35" viewBox="0 0 36 35"><path d="M6 22.2 C4.6 20.6 5.6 18.6 7.6 18.4 C9.4 18.2 11 19.6 12.4 21 C13.6 21.8 14.2 21 14 19.8 L12.6 9 C12.4 7.4 15.2 7 15.6 8.6 L17.4 17 L18 6.8 C18.2 5 21.2 5 21.4 6.8 L21.6 17 L23.4 8.4 C23.8 6.8 26.6 7.2 26.4 8.8 L24.8 18.4 L27.8 13 C28.4 11.6 31 12.2 30.6 13.8 L27.4 24 C26 28.2 22.4 30.4 18.8 30.4 C14.8 30.4 10.8 27.6 6 22.2Z" fill="#f5f7fa" stroke="#4f555c" stroke-width="1.4" stroke-linejoin="round"/></svg>
<div class="a" style="left:91px;top:1019px;width:1521px;height:10px;background:#cfd5de;border-top:1px solid #c3cad4"></div>
<div class="a" style="left:311px;top:1021px;width:168px;height:12px;border-radius:6px;background:#72767d"></div>

<!-- RIGHT PANEL -->
<div id="rp" class="a"></div>
<div class="a" style="left:1643px;top:60px;width:247px;height:40px;border-radius:20px;background:linear-gradient(180deg,#7fe3e6 0%,#22c7d3 9%,#20c6d2 80%,#1aa9b8 100%)"></div>
<svg class="a" style="left:1738px;top:68px" width="20" height="24" viewBox="0 0 20 24"><path d="M3 3.5 L4.5 5 M8 1 L8.6 3.2 M13.6 1.2 L13 3.4" stroke="#f3b52a" stroke-width="1.4" stroke-linecap="round"/><path d="M11 5.5 C6.5 5.5 3.5 8.6 3.5 12.3 C3.5 15.4 5.6 17.2 7.5 18.6 L10 21.6 L13.4 20 C16 18 18.2 15.8 18.2 12.2 C18.2 8.4 15.4 5.5 11 5.5Z" fill="#d6f2f2"/><path d="M6.5 13.2 C8 11.6 9.4 12.6 10 14.2 C11.2 12.2 12.6 11.8 13.2 12.6 M10 14.2 L12 18.4" stroke="#f1b62a" stroke-width="1.4" fill="none"/><path d="M9.6 19.6 L13.6 17.6 L14.4 20.4 L11 22.6Z" fill="#f2a92a"/><circle cx="13.2" cy="8.8" r="1" fill="#fff"/></svg>
<div class="a" style="left:1762px;top:72px;font-size:14px;line-height:18px;color:#fff;letter-spacing:-0.2px;text-shadow:0 0 0.4px #fff">Make</div>
<div class="a" style="left:1613px;top:110px;width:304px;height:1px;background:#e3e6ea"></div>
<div class="a" style="left:1623px;top:120px;width:61px;height:30px;border-radius:5px;background:#eff2f4"></div>
<div class="a" style="left:1631px;top:126px;font-size:14.2px;line-height:18px;color:#2f3439">Design</div>
<div class="a" style="left:1697px;top:126px;font-size:14.2px;line-height:18px;color:#4d535a">Layers</div>
<svg class="a" style="left:1887px;top:128px" width="14" height="14" viewBox="0 0 14 14" fill="#6b7178"><rect x="1" y="1" width="11" height="1.3"/><rect x="1" y="5" width="5" height="1.3"/><rect x="1" y="11" width="5" height="1.3"/><path d="M7.5 8.2 L12.6 5 V11.4Z"/></svg>
<div class="a" style="left:1613px;top:159px;width:304px;height:1px;background:#e3e6ea"></div>
<div class="a rl" style="left:1623px;top:181px;font-size:14.3px;color:#3b4046">Page Setup</div>
<div class="a rl" style="left:1623px;top:211px;font-size:15px">My device</div>
<div class="a dd" style="top:236px"><span>iCraft Cutting Machine</span></div>
<div class="a" style="left:1623px;top:294px;width:286px;height:32px;border-radius:16px;background:#e6e8ed"></div>
<div class="a" style="left:1625px;top:296px;width:141px;height:28px;border-radius:14px;background:#fff"></div>
<div class="a" style="left:1625px;top:301px;width:141px;text-align:center;font-size:15px;line-height:18px;color:#22bfcd;font-weight:bold">Cutting Mat</div>
<div class="a" style="left:1766px;top:302px;width:143px;text-align:center;font-size:13px;line-height:16px;color:#596067">Matless Materials</div>
<div class="a rl" style="left:1623px;top:336px;font-size:15px">Cutting Mat</div>
<div class="a dd" style="top:362px"><span style="top:9.5px">12*12 in (30.48*3 0.48 cm)</span></div>
<div class="a rl" style="left:1623px;top:410px;font-size:15px">Material Size</div>
<div class="a dd" style="top:436px"><span style="top:9.5px">12*12 in (30.48*30.48 cm)</span></div>
<div class="a rl" style="left:1623px;top:484px;font-size:15px">Print and Cut job</div>
<div class="a" style="left:1624px;top:514px;width:12px;height:12px;border:1px solid #b9bfc7;border-radius:2px;background:#fff"></div>
<div class="a rl" style="left:1643px;top:510px;font-size:15px">Show Print Border</div>
<svg class="a" style="left:1884px;top:250px" width="14" height="9" viewBox="0 0 14 9"><path d="M1 1.2 L7 7.4 L13 1.2" fill="none" stroke="#4d535a" stroke-width="1.3"/></svg>
<svg class="a" style="left:1884px;top:376px" width="14" height="9" viewBox="0 0 14 9"><path d="M1 1.2 L7 7.4 L13 1.2" fill="none" stroke="#4d535a" stroke-width="1.3"/></svg>
<svg class="a" style="left:1884px;top:450px" width="14" height="9" viewBox="0 0 14 9"><path d="M1 1.2 L7 7.4 L13 1.2" fill="none" stroke="#4d535a" stroke-width="1.3"/></svg>
</body></html>
